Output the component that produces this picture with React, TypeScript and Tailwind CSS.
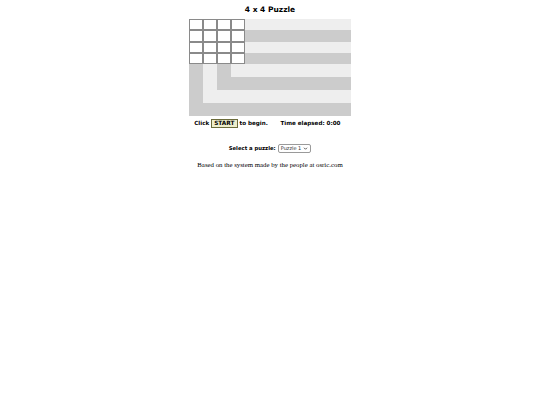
const LIGHT = "bg-[#eeeeee]"
const GRAY = "bg-[#cccccc]"

// lower clue area: each row lists the colour for the 4 columns and the right strip
const LOWER_ROWS: string[][] = [
  [GRAY, LIGHT, GRAY, LIGHT, LIGHT],
  [GRAY, LIGHT, GRAY, GRAY, GRAY],
  [GRAY, LIGHT, LIGHT, LIGHT, LIGHT],
  [GRAY, GRAY, GRAY, GRAY, GRAY],
]

function Board() {
  return (
    <div className="grid grid-cols-[14px_14px_14px_14px_106px] grid-rows-[11px_12px_11px_11px_13px_13px_13px_13px]">
      {[0, 1, 2, 3].map((r) => (
        <div key={r} className="contents">
          {[0, 1, 2, 3].map((c) => (
            <div key={c} className="bg-white border border-[#8a8a8a]" />
          ))}
          <div className={r % 2 === 0 ? LIGHT : GRAY} />
        </div>
      ))}
      {LOWER_ROWS.map((row, r) => (
        <div key={"l" + r} className="contents">
          {row.map((cls, c) => (
            <div key={c} className={cls} />
          ))}
        </div>
      ))}
    </div>
  )
}

export default function App() {
  return (
    <div className="w-full flex flex-col items-center text-black" style={{ fontFamily: "'DejaVu Sans', Verdana, sans-serif" }}>
      <h1 className="pt-[5px] text-[7.5px] leading-[10px] font-bold">4 x 4 Puzzle</h1>
      <div className="mt-[4px]">
        <Board />
      </div>
      <div className="w-[162px] grid grid-cols-2 mt-[2px] text-[5.6px] font-bold leading-[10px]">
        <div className="flex items-center justify-center whitespace-nowrap pl-[3px]">
          Click
          <span className="mx-[2px] px-[2px] h-[9px] leading-[7px] border border-[#6b6b3a] bg-[#eeeecc] text-[5.8px]">START</span>
          to begin.
        </div>
        <div className="flex items-center justify-center whitespace-nowrap">Time elapsed: 0:00</div>
      </div>
      <div className="mt-[15px] flex items-center text-[5.3px] font-bold leading-[10px] whitespace-nowrap">
        Select a puzzle:
        <div className="ml-[2px] flex items-center h-[9px] px-[2px] border border-[#9a9a9a] rounded-[2px] bg-white font-normal text-[5px] text-[#333]">
          <span>Puzzle 1</span>
          <svg viewBox="0 0 10 10" className="ml-[2px] w-[5px] h-[5px]">
            <path d="M2 3.5 L5 6.5 L8 3.5" fill="none" stroke="#333" strokeWidth="1.6" />
          </svg>
        </div>
      </div>
      <p className="mt-[7px] text-[6.8px] leading-[9px] whitespace-nowrap" style={{ fontFamily: "'Liberation Serif', 'Times New Roman', serif" }}>
        Based on the system made by the people at osric.com
      </p>
    </div>
  )
}
